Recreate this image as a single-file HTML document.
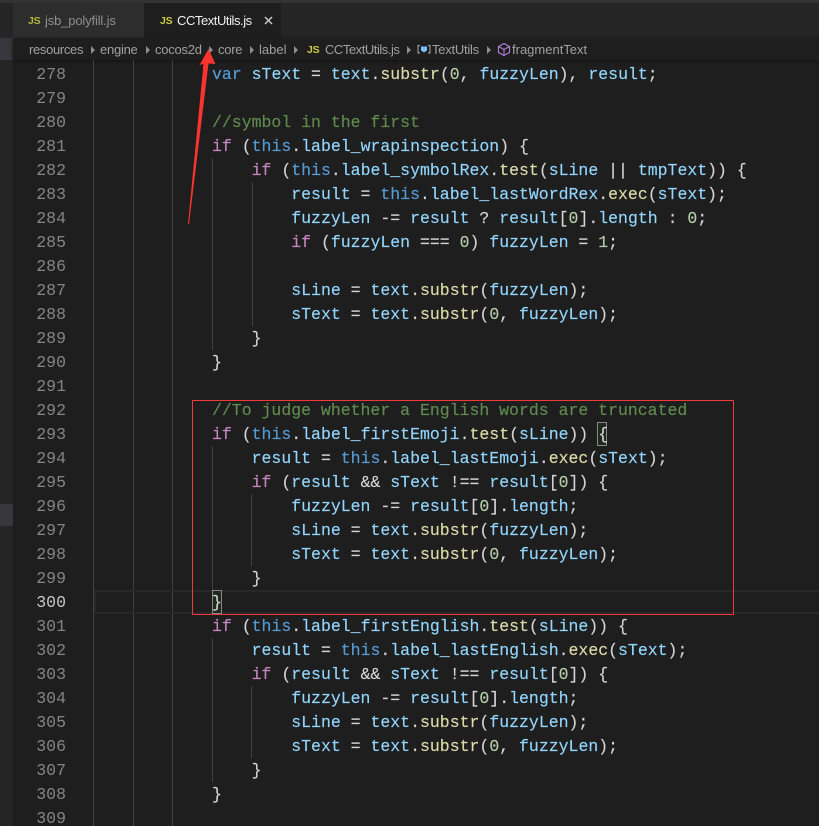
<!DOCTYPE html>
<html><head><meta charset="utf-8">
<style>
html,body{margin:0;padding:0;background:#1e1e1e}
#r{position:relative;width:819px;height:826px;overflow:hidden;background:#1e1e1e;font-family:"Liberation Sans",sans-serif}
#r div{position:absolute}
.l{left:93.2px;height:24px;margin-top:1px;font:16.5px/24px "Liberation Mono",monospace;color:#d4d4d4;white-space:pre;-webkit-text-stroke:.15px}
.g{left:0;width:66px;margin-top:1px;text-align:right;font:16.5px/24px "Liberation Mono",monospace;color:#858585;height:24px}
.ig{width:1px;background:#404040}
.k{color:#c586c0}.b{color:#569cd6}.v{color:#92d6fd}.f{color:#dcdcaa}.c{color:#608b4e}.n{color:#b5cea8}
.bc{top:41px;height:18px;font-size:13px;line-height:18px;color:#a0a0a0;white-space:nowrap;letter-spacing:-.25px}
.js{font-weight:bold;font-size:10.5px;color:#cbcb41;white-space:nowrap;letter-spacing:-.2px}
.ch{width:0;height:0;border-left:4px solid #8f8f8f;border-top:4px solid transparent;border-bottom:4px solid transparent;top:46px}
</style></head><body>
<div id="r">
<div style="left:0;top:0;width:819px;height:3px;background:#333333"></div>
<div style="left:0;top:3px;width:13px;height:823px;background:#252526"></div>
<div style="left:0;top:38px;width:13px;height:22px;background:#37373d"></div>
<div style="left:0;top:504px;width:13px;height:22px;background:#37373d"></div>
<div style="left:13px;top:3px;width:806px;height:35px;background:#252526"></div>
<div style="left:13px;top:3px;width:131px;height:35px;background:#2d2d2d"></div>
<div style="left:144px;top:3px;width:137px;height:35px;background:#1e1e1e"></div>
<div class="js" style="left:28px;top:14px;line-height:14px;color:#b5b53c">JS</div>
<div style="left:45px;top:12px;font-size:13px;line-height:18px;color:#8f8f8f;letter-spacing:-.15px;white-space:nowrap">jsb_polyfill.js</div>
<div class="js" style="left:160px;top:14px;line-height:14px">JS</div>
<div style="left:177px;top:12px;font-size:13px;line-height:18px;color:#f0f0f0;letter-spacing:-.44px;white-space:nowrap">CCTextUtils.js</div>
<svg style="position:absolute;left:264px;top:16px" width="9" height="9" viewBox="0 0 9 9"><path d="M1 1L8 8M8 1L1 8" stroke="#c8c8c8" stroke-width="1.5"/></svg>

<div style="left:13px;top:38px;width:806px;height:22px;background:#1e1e1e;box-shadow:0 1px 3px #111"></div>
<div class="bc" style="left:29px;letter-spacing:-.33px">resources</div><div class="ch" style="left:91px"></div>
<div class="bc" style="left:100px">engine</div><div class="ch" style="left:146px"></div>
<div class="bc" style="left:155px">cocos2d</div><div class="ch" style="left:209px"></div>
<div class="bc" style="left:218px">core</div><div class="ch" style="left:250px"></div>
<div class="bc" style="left:259px;letter-spacing:0">label</div><div class="ch" style="left:294px"></div>
<div class="js" style="left:307px;top:43px;line-height:14px">JS</div>
<div class="bc" style="left:325px;letter-spacing:-.46px">CCTextUtils.js</div><div class="ch" style="left:407px"></div>
<svg style="position:absolute;left:417px;top:43px" width="14" height="13" viewBox="0 0 14 13"><path d="M3 2.5H1V10H3M11 2.5H13V10H11" fill="none" stroke="#a8a8a8"/><path d="M4 3.5H10V7.5L7 9.5L4 7.5Z" fill="#75beff"/></svg>
<div class="bc" style="left:432px">TextUtils</div><div class="ch" style="left:487px"></div>
<svg style="position:absolute;left:497px;top:42px" width="14" height="15" viewBox="0 0 14 15"><path d="M7 1.5L12.5 4.5V10.5L7 13.5L1.5 10.5V4.5ZM1.5 4.5L7 7.5L12.5 4.5M7 7.5V13.5" fill="none" stroke="#b180d7" stroke-width="1.1"/></svg>
<div class="bc" style="left:512px;letter-spacing:0">fragmentText</div>

<div class="ig" style="left:93px;top:60px;height:766px"></div>
<div class="ig" style="left:133px;top:60px;height:766px"></div>
<div class="ig" style="left:172px;top:60px;height:766px"></div>
<div class="ig" style="left:212px;top:158px;height:192px"></div>
<div class="ig" style="left:252px;top:182px;height:144px"></div>
<div class="ig" style="left:212px;top:446px;height:144px"></div>
<div class="ig" style="left:251px;top:494px;height:72px"></div>
<div class="ig" style="left:212px;top:638px;height:144px"></div>
<div class="ig" style="left:251px;top:686px;height:72px"></div>

<div style="left:94px;top:590px;width:725px;height:2px;background:#282828"></div>
<div style="left:94px;top:612px;width:725px;height:2px;background:#282828"></div>
<div style="left:94px;top:590px;width:2px;height:24px;background:#282828"></div>
<div style="left:212px;top:590px;width:8px;height:22px;border:1px solid #888;background:#1e2a1e"></div>
<div style="left:597px;top:422px;width:8px;height:22px;border:1px solid #888;background:#1e2a1e"></div>

<div class="g" style="top:62px">278</div>
<div class="g" style="top:86px">279</div>
<div class="g" style="top:110px">280</div>
<div class="g" style="top:134px">281</div>
<div class="g" style="top:158px">282</div>
<div class="g" style="top:182px">283</div>
<div class="g" style="top:206px">284</div>
<div class="g" style="top:230px">285</div>
<div class="g" style="top:254px">286</div>
<div class="g" style="top:278px">287</div>
<div class="g" style="top:302px">288</div>
<div class="g" style="top:326px">289</div>
<div class="g" style="top:350px">290</div>
<div class="g" style="top:374px">291</div>
<div class="g" style="top:398px">292</div>
<div class="g" style="top:422px">293</div>
<div class="g" style="top:446px">294</div>
<div class="g" style="top:470px">295</div>
<div class="g" style="top:494px">296</div>
<div class="g" style="top:518px">297</div>
<div class="g" style="top:542px">298</div>
<div class="g" style="top:566px">299</div>
<div class="g" style="top:590px;color:#c6c6c6">300</div>
<div class="g" style="top:614px">301</div>
<div class="g" style="top:638px">302</div>
<div class="g" style="top:662px">303</div>
<div class="g" style="top:686px">304</div>
<div class="g" style="top:710px">305</div>
<div class="g" style="top:734px">306</div>
<div class="g" style="top:758px">307</div>
<div class="g" style="top:782px">308</div>
<div class="g" style="top:806px">309</div>

<div class="l" style="top:62px">            <span class="b">var</span> <span class="v">sText</span> = <span class="v">text</span>.<span class="f">substr</span>(<span class="n">0</span>, <span class="v">fuzzyLen</span>), <span class="v">result</span>;</div>
<div class="l c" style="top:110px">            //symbol in the first</div>
<div class="l" style="top:134px">            <span class="k">if</span> (<span class="b">this</span>.<span class="v">label_wrapinspection</span>) {</div>
<div class="l" style="top:158px">                <span class="k">if</span> (<span class="b">this</span>.<span class="v">label_symbolRex</span>.<span class="f">test</span>(<span class="v">sLine</span> || <span class="v">tmpText</span>)) {</div>
<div class="l" style="top:182px">                    <span class="v">result</span> = <span class="b">this</span>.<span class="v">label_lastWordRex</span>.<span class="f">exec</span>(<span class="v">sText</span>);</div>
<div class="l" style="top:206px">                    <span class="v">fuzzyLen</span> -= <span class="v">result</span> ? <span class="v">result</span>[<span class="n">0</span>].<span class="v">length</span> : <span class="n">0</span>;</div>
<div class="l" style="top:230px">                    <span class="k">if</span> (<span class="v">fuzzyLen</span> === <span class="n">0</span>) <span class="v">fuzzyLen</span> = <span class="n">1</span>;</div>
<div class="l" style="top:278px">                    <span class="v">sLine</span> = <span class="v">text</span>.<span class="f">substr</span>(<span class="v">fuzzyLen</span>);</div>
<div class="l" style="top:302px">                    <span class="v">sText</span> = <span class="v">text</span>.<span class="f">substr</span>(<span class="n">0</span>, <span class="v">fuzzyLen</span>);</div>
<div class="l" style="top:326px">                }</div>
<div class="l" style="top:350px">            }</div>
<div class="l c" style="top:398px">            //To judge whether a English words are truncated</div>
<div class="l" style="top:422px">            <span class="k">if</span> (<span class="b">this</span>.<span class="v">label_firstEmoji</span>.<span class="f">test</span>(<span class="v">sLine</span>)) {</div>
<div class="l" style="top:446px">                <span class="v">result</span> = <span class="b">this</span>.<span class="v">label_lastEmoji</span>.<span class="f">exec</span>(<span class="v">sText</span>);</div>
<div class="l" style="top:470px">                <span class="k">if</span> (<span class="v">result</span> &amp;&amp; <span class="v">sText</span> !== <span class="v">result</span>[<span class="n">0</span>]) {</div>
<div class="l" style="top:494px">                    <span class="v">fuzzyLen</span> -= <span class="v">result</span>[<span class="n">0</span>].<span class="v">length</span>;</div>
<div class="l" style="top:518px">                    <span class="v">sLine</span> = <span class="v">text</span>.<span class="f">substr</span>(<span class="v">fuzzyLen</span>);</div>
<div class="l" style="top:542px">                    <span class="v">sText</span> = <span class="v">text</span>.<span class="f">substr</span>(<span class="n">0</span>, <span class="v">fuzzyLen</span>);</div>
<div class="l" style="top:566px">                }</div>
<div class="l" style="top:590px">            }</div>
<div class="l" style="top:614px">            <span class="k">if</span> (<span class="b">this</span>.<span class="v">label_firstEnglish</span>.<span class="f">test</span>(<span class="v">sLine</span>)) {</div>
<div class="l" style="top:638px">                <span class="v">result</span> = <span class="b">this</span>.<span class="v">label_lastEnglish</span>.<span class="f">exec</span>(<span class="v">sText</span>);</div>
<div class="l" style="top:662px">                <span class="k">if</span> (<span class="v">result</span> &amp;&amp; <span class="v">sText</span> !== <span class="v">result</span>[<span class="n">0</span>]) {</div>
<div class="l" style="top:686px">                    <span class="v">fuzzyLen</span> -= <span class="v">result</span>[<span class="n">0</span>].<span class="v">length</span>;</div>
<div class="l" style="top:710px">                    <span class="v">sLine</span> = <span class="v">text</span>.<span class="f">substr</span>(<span class="v">fuzzyLen</span>);</div>
<div class="l" style="top:734px">                    <span class="v">sText</span> = <span class="v">text</span>.<span class="f">substr</span>(<span class="n">0</span>, <span class="v">fuzzyLen</span>);</div>
<div class="l" style="top:758px">                }</div>
<div class="l" style="top:782px">            }</div>

<div style="left:192px;top:400px;width:540px;height:213px;border:1px solid #f03a3a"></div>
<svg style="position:absolute;left:0;top:0" width="819" height="826"><path d="M208.5 49L215.5 64L208.5 63.5L189 224L188 224L203.5 64L199.5 65Z" fill="#f9342f"/></svg>
</div>
</body></html>
